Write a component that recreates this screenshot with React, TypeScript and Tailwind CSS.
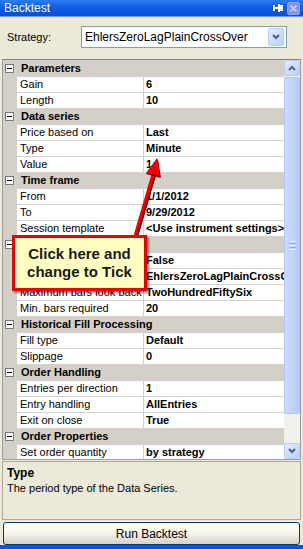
import React from "react";

type Row = { h?: string; n?: string; v?: string };

const rows: Row[] = [
  { h: "Parameters" },
  { n: "Gain", v: "6" },
  { n: "Length", v: "10" },
  { h: "Data series" },
  { n: "Price based on", v: "Last" },
  { n: "Type", v: "Minute" },
  { n: "Value", v: "1" },
  { h: "Time frame" },
  { n: "From", v: "1/1/2012" },
  { n: "To", v: "9/29/2012" },
  { n: "Session template", v: "<Use instrument settings>" },
  { h: "General" },
  { n: "Include commission", v: "False" },
  { n: "Label", v: "EhlersZeroLagPlainCrossOver" },
  { n: "Maximum bars look back", v: "TwoHundredFiftySix" },
  { n: "Min. bars required", v: "20" },
  { h: "Historical Fill Processing" },
  { n: "Fill type", v: "Default" },
  { n: "Slippage", v: "0" },
  { h: "Order Handling" },
  { n: "Entries per direction", v: "1" },
  { n: "Entry handling", v: "AllEntries" },
  { n: "Exit on close", v: "True" },
  { h: "Order Properties" },
  { n: "Set order quantity", v: "by strategy" },
];

function MinusBox() {
  return (
    <div className="w-[9px] h-[9px] border border-[#7a7a7a] bg-white flex items-center justify-center shrink-0">
      <div className="w-[5px] h-px bg-black" />
    </div>
  );
}

function GridRow({ row }: { row: Row }) {
  if (row.h) {
    return (
      <div className="h-[16px] flex items-center bg-[#D4D0C8] pl-[2px] whitespace-nowrap overflow-hidden">
        <MinusBox />
        <span className="ml-[7px] font-bold">{row.h}</span>
      </div>
    );
  }
  return (
    <div className="h-[16px] flex bg-[#D4D0C8]">
      <div className="w-[14px] shrink-0" />
      <div className="w-[126px] shrink-0 bg-white border-b border-[#D4D0C8] pl-[3px] leading-[15px] whitespace-nowrap overflow-hidden">
        {row.n}
      </div>
      <div className="w-px shrink-0" />
      <div className="flex-1 min-w-0 bg-white border-b border-[#D4D0C8] pl-[2px] leading-[15px] font-bold whitespace-nowrap overflow-hidden">
        {row.v}
      </div>
    </div>
  );
}

function Scrollbar() {
  return (
    <div className="w-[16px] shrink-0 bg-[#F3F1EC] flex flex-col">
      <div className="h-[16px] rounded-[2px] border border-[#B9CDF6] bg-gradient-to-br from-[#E3ECFD] to-[#B9CFFB] flex items-center justify-center">
        <svg width="8" height="6" viewBox="0 0 8 6">
          <path d="M1 5 L4 2 L7 5" stroke="#4D6185" strokeWidth="2" fill="none" />
        </svg>
      </div>
      <div className="h-[337px] mt-px rounded-[2px] border border-[#B2C7F4] bg-gradient-to-r from-[#CADAFC] via-[#C2D4FC] to-[#B3C8F8] flex flex-col items-center justify-center gap-[1px]">
        <div className="w-[7px] h-px bg-[#EEF4FE]" />
        <div className="w-[7px] h-px bg-[#8CB0F8]" />
        <div className="w-[7px] h-px bg-[#EEF4FE]" />
        <div className="w-[7px] h-px bg-[#8CB0F8]" />
        <div className="w-[7px] h-px bg-[#EEF4FE]" />
      </div>
      <div className="flex-1" />
      <div className="h-[16px] rounded-[2px] border border-[#B9CDF6] bg-gradient-to-br from-[#E3ECFD] to-[#B9CFFB] flex items-center justify-center">
        <svg width="8" height="6" viewBox="0 0 8 6">
          <path d="M1 1 L4 4 L7 1" stroke="#4D6185" strokeWidth="2" fill="none" />
        </svg>
      </div>
    </div>
  );
}

export default function App() {
  return (
    <div
      className="relative w-[303px] h-[549px] bg-[#ECE9D8] text-[11px] text-black flex flex-col overflow-hidden"
      style={{ fontFamily: '"Liberation Sans", Arial, sans-serif' }}
    >
      {/* Title bar */}
      <div className="h-[16px] bg-gradient-to-b from-[#2C7CF2] via-[#0C5BE2] to-[#0650D6] flex items-center pl-[4px] pr-[3px]">
        <span className="text-white text-[12px]">Backtest</span>
        <div className="flex-1" />
        <svg width="11" height="10" viewBox="0 0 11 10" className="mr-[3px]">
          <rect x="0" y="2" width="2" height="6" fill="#fff" />
          <rect x="2" y="4" width="3" height="2" fill="#fff" />
          <rect x="5" y="1" width="2" height="8" fill="#fff" />
          <rect x="7" y="2" width="3" height="6" fill="#fff" />
          <rect x="7" y="6" width="3" height="1" fill="#cfd8f0" />
        </svg>
        <div className="w-[13px] h-[13px] rounded-[2px] bg-[#8393E0] border border-[#9AA8E6] flex items-center justify-center">
          <svg width="7" height="7" viewBox="0 0 7 7">
            <path d="M0.5 0.5 L6.5 6.5 M6.5 0.5 L0.5 6.5" stroke="#C7CDF0" strokeWidth="1.6" />
          </svg>
        </div>
      </div>
      <div className="h-px bg-[#6E9BEA]" />

      {/* Strategy selector */}
      <div className="h-[42px] flex items-center pl-[7px] pb-[1px]">
        <span className="w-[74px]">Strategy:</span>
        <div className="w-[206px] h-[22px] border border-[#7F9DB9] bg-white flex items-center pl-[3px] pr-[2px]">
          <span className="flex-1 text-[12px] whitespace-nowrap">EhlersZeroLagPlainCrossOver</span>
          <div className="w-[16px] h-[18px] rounded-[2px] border border-[#B9CDF6] bg-gradient-to-br from-[#E3ECFD] to-[#B9CFFB] flex items-center justify-center">
            <svg width="8" height="6" viewBox="0 0 8 6">
              <path d="M1 1 L4 4 L7 1" stroke="#4D6185" strokeWidth="2" fill="none" />
            </svg>
          </div>
        </div>
      </div>

      {/* Property grid */}
      <div className="mx-[2px] h-[401px] border border-[#9D9D9D] border-t-[#808080] flex bg-[#D4D0C8]">
        <div className="flex-1 min-w-0 pt-px overflow-hidden">
          {rows.map((r, i) => (
            <GridRow key={i} row={r} />
          ))}
        </div>
        <Scrollbar />
      </div>

      {/* Description */}
      <div className="mx-[2px] mt-[1px] h-[60px] border border-[#ACA899] px-[4px] pt-[4px]">
        <div className="font-bold text-[12px] leading-[15px]">Type</div>
        <div className="leading-[15px]">The period type of the Data Series.</div>
      </div>

      {/* Run button */}
      <div className="px-[3px] pt-[2px]">
        <button className="w-full h-[23px] rounded-[3px] border border-[#003C74] bg-gradient-to-b from-white via-[#F4F3EE] to-[#D6D0C5] text-[12px] text-black">
          Run Backtest
        </button>
      </div>
      <div className="flex-1" />
      <div className="h-[4px] bg-[#0A55DA]" />

      {/* Annotation arrow */}
      <svg className="absolute left-0 top-0 pointer-events-none" width="303" height="549">
        <line x1="136" y1="237" x2="155" y2="172" stroke="#7A0000" strokeWidth="4" />
        <line x1="135" y1="236" x2="154" y2="171" stroke="#F00000" strokeWidth="3" />
        <polygon points="158,159 161,178 146,174" fill="#7A0000" />
        <polygon points="157,158 160,176 146,173" fill="#F00000" />
      </svg>

      {/* Callout */}
      <div className="absolute left-[12px] top-[235px] w-[135px] h-[56px] bg-[#FFFFC4] border-[3px] border-[#E80000] shadow-[2px_2px_2px_rgba(0,0,0,0.45)] flex flex-col items-center justify-center text-[15px] font-bold leading-[18px] text-[#1a1a1a]">
        <span>Click here and</span>
        <span>change to Tick</span>
      </div>
    </div>
  );
}
